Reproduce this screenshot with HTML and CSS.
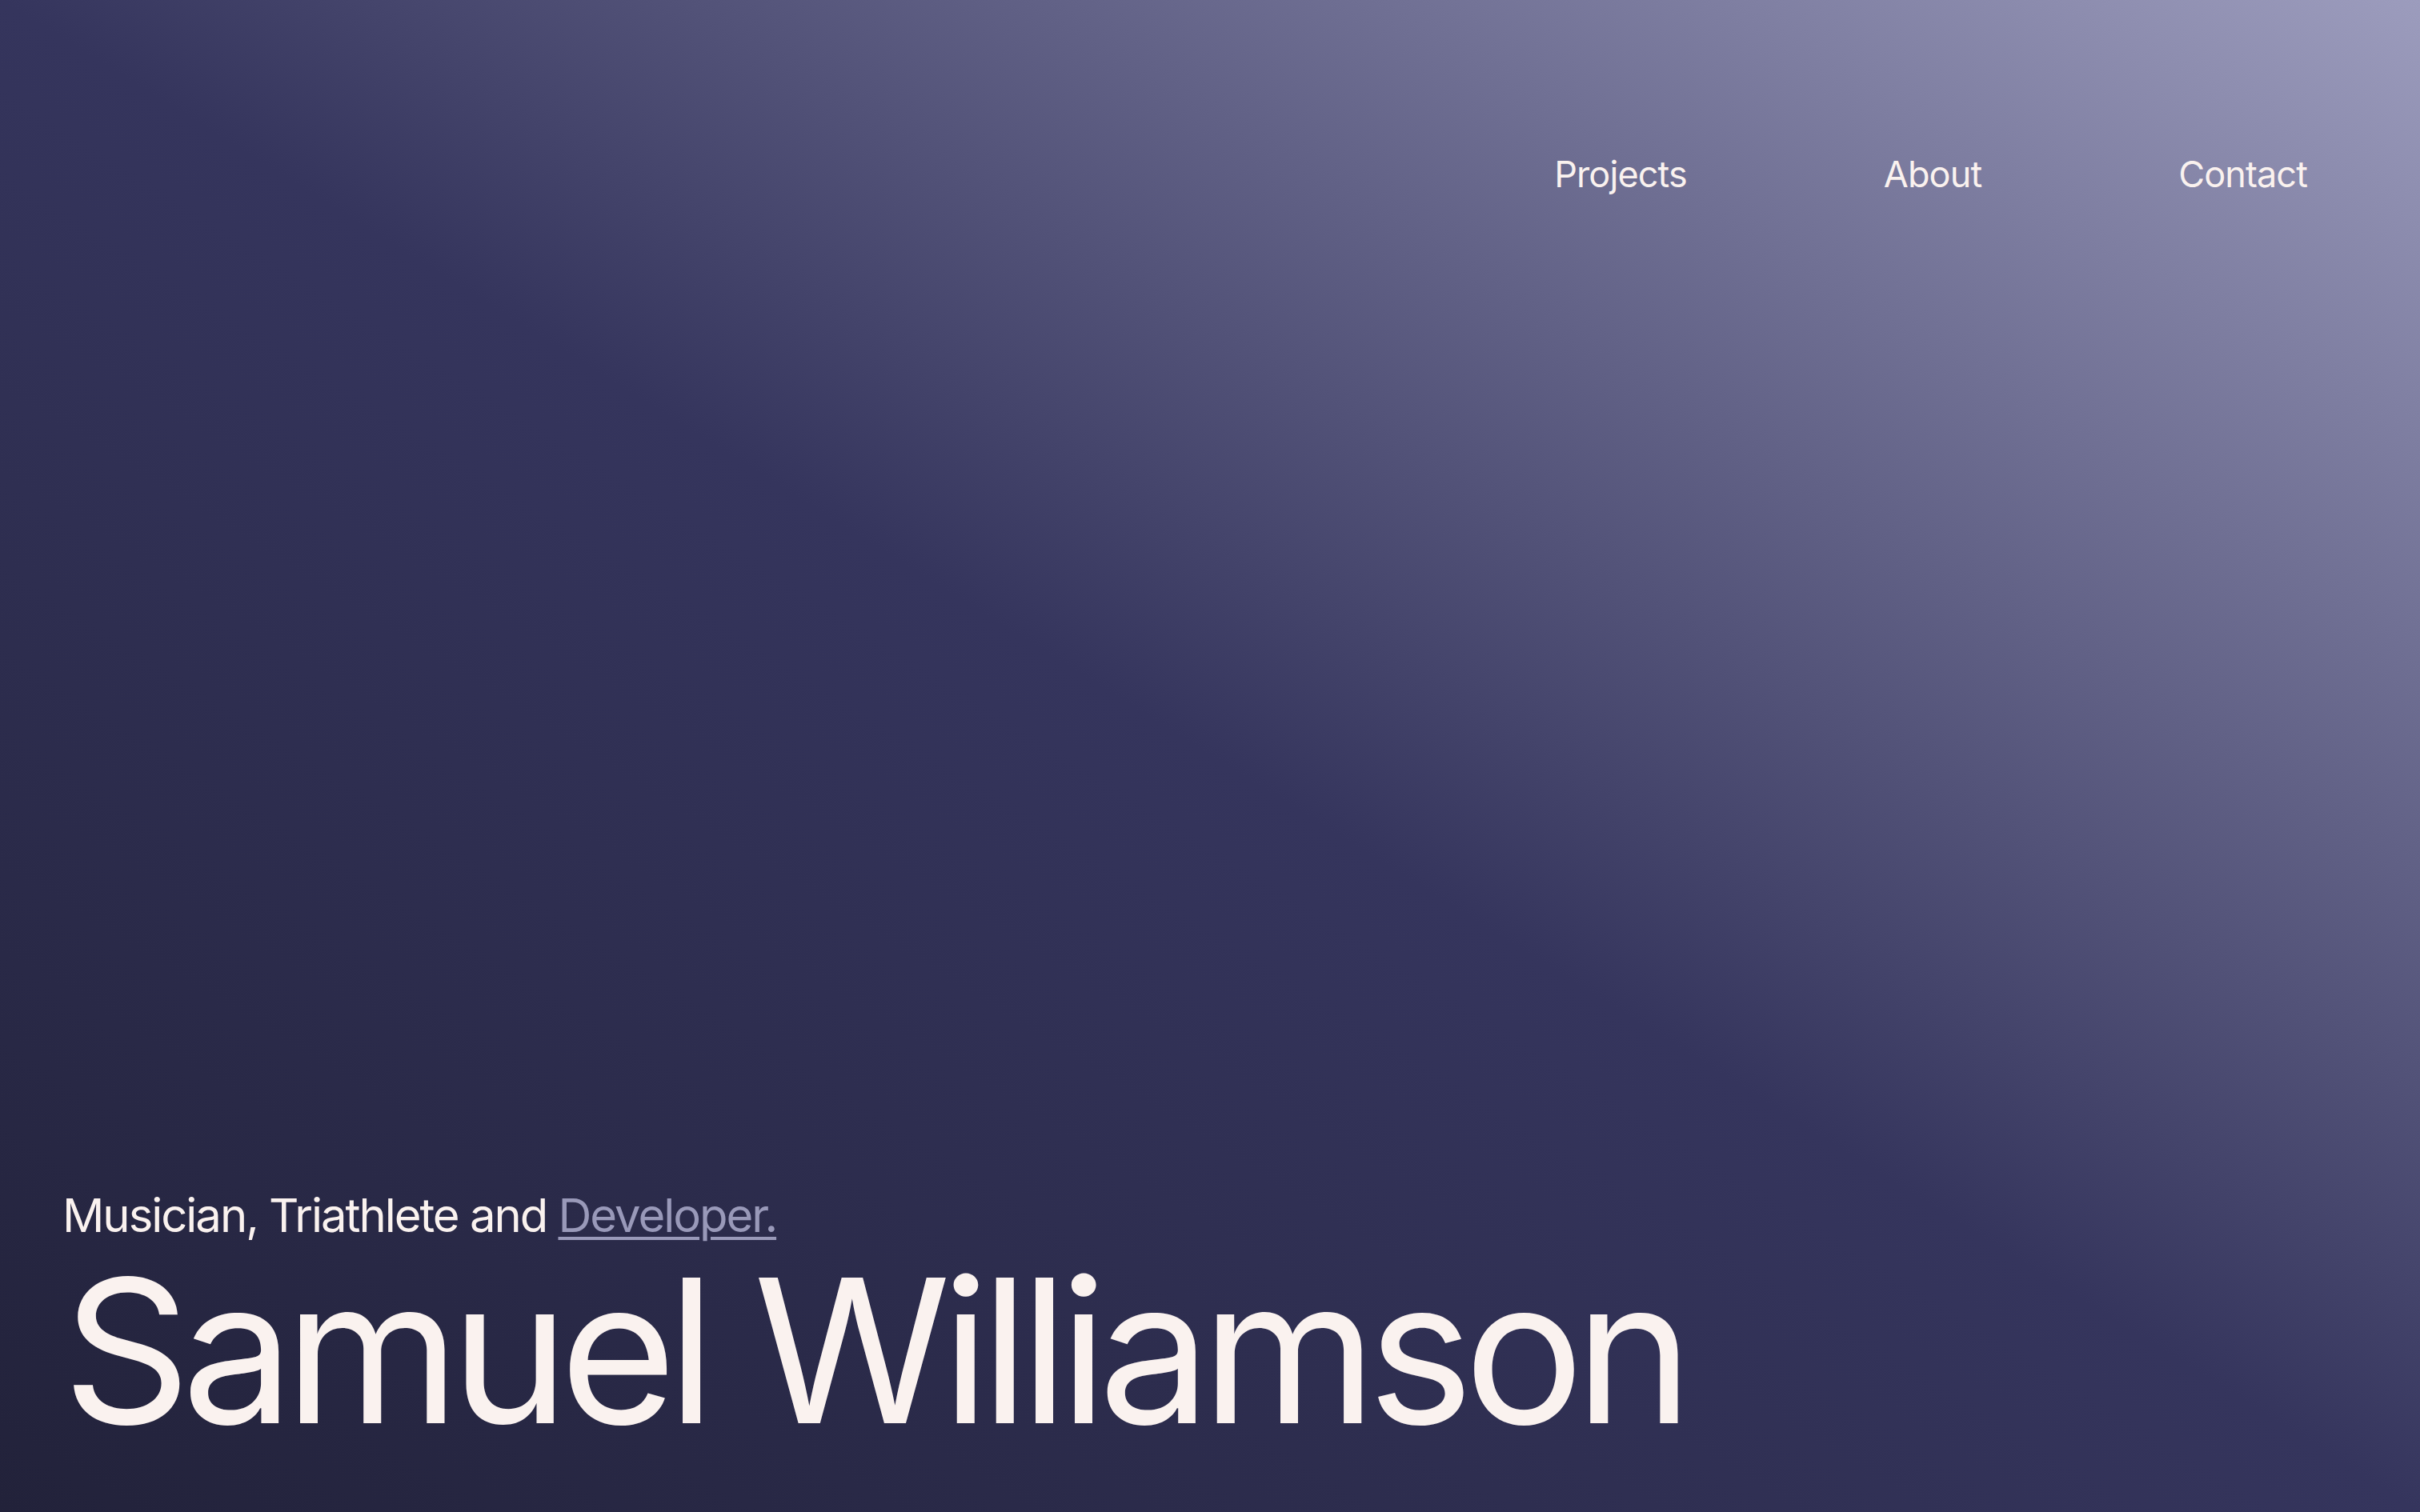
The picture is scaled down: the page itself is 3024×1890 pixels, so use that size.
FILE: index.html
```html
<!DOCTYPE html>
<html lang="en">
<head>
<meta charset="utf-8">
<title>Samuel Williamson</title>
<link rel="stylesheet" href="styles.css">
</head>
<body>
<div class="page">
  <header class="site-header">
    <nav class="nav">
      <a class="nav-link" href="#projects">Projects</a>
      <a class="nav-link" href="#about">About</a>
      <a class="nav-link" href="#contact">Contact</a>
    </nav>
  </header>
  <main class="hero">
    <p class="tagline">Musician, Triathlete and <a class="tagline-link" href="#dev">Developer.</a></p>
    <h1 class="name">Samuel Williamson</h1>
  </main>
</div>
</body>
</html>
```
FILE: styles.css
```css
html, body {
  margin: 0;
  padding: 0;
  height: 100%;
}

body {
  font-family: Inter, "Noto Sans", "Liberation Sans", sans-serif;
  color: #faf2ef;
  background: #2c2c4c;
  overflow: hidden;
}

.page {
  height: 100vh;
  box-sizing: border-box;
  display: flex;
  flex-direction: column;
  justify-content: space-between;
  background: linear-gradient(to top right, #22223a 0%, #35355d 50%, #9c9cbd 100%);
  padding: 0 141px 89px 78px;
}

.site-header {
  display: flex;
  justify-content: flex-end;
  padding-top: 191px;
}

.nav {
  display: flex;
  gap: 246px;
}

.nav-link {
  color: #faf2ef;
  text-decoration: none;
  font-size: 45px;
  letter-spacing: -0.02em;
  line-height: 54px;
}

.hero {
  display: flex;
  flex-direction: column;
}

.tagline {
  margin: 0 0 28px 0;
  font-size: 58px;
  line-height: 58px;
  letter-spacing: -0.035em;
}

.tagline-link {
  color: #9999b9;
  text-decoration: underline;
  text-decoration-thickness: 4px;
  text-underline-offset: 6px;
}

.name {
  margin: 0;
  font-weight: 400;
  font-size: 250px;
  line-height: 0.9;
  letter-spacing: -0.046em;
}
```
